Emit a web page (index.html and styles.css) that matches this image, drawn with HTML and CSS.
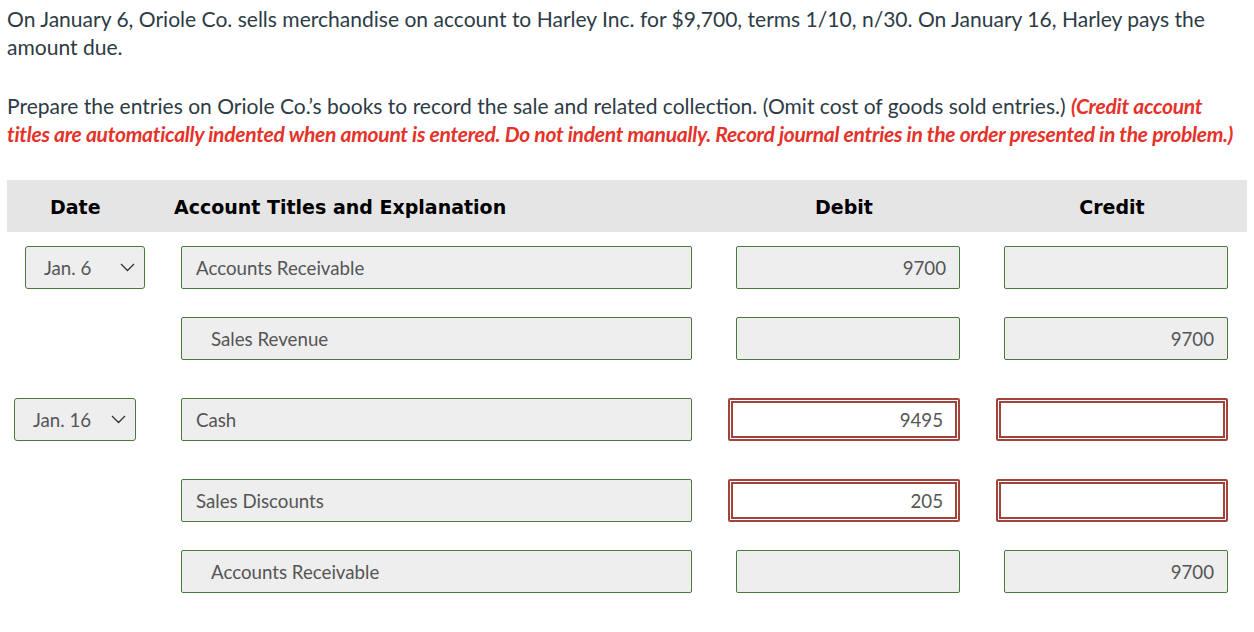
FILE: index.html
```html
<!DOCTYPE html>
<html lang="en">
<head>
<meta charset="utf-8">
<title>Journal entries</title>
<link rel="stylesheet" href="styles.css">
</head>
<body>
<div class="page">
  <p class="q">On January 6, Oriole Co. sells merchandise on account to Harley Inc. for $9,700, terms 1/10, n/30. On January 16, Harley pays the amount due.</p>
  <p class="q q2">Prepare the entries on Oriole Co.’s books to record the sale and related collection. (Omit cost of goods sold entries.) <em class="note">(Credit account titles are automatically indented when amount is entered. Do not indent manually. Record journal entries in the order presented in the problem.)</em></p>

  <div class="journal">
    <div class="jrow head">
      <div class="h-date">Date</div>
      <div class="h-acct">Account Titles and Explanation</div>
      <div class="h-debit">Debit</div>
      <div class="h-credit">Credit</div>
    </div>

    <div class="jrow first">
      <div class="sel"><span>Jan. 6</span><svg class="chev" width="15" height="9" viewBox="0 0 15 9"><path d="M1 1 L7.5 7.5 L14 1" fill="none" stroke="#333" stroke-width="1.3"/></svg></div>
      <div class="fld acct">Accounts Receivable</div>
      <div class="fld amt debit">9700</div>
      <div class="fld amt credit"></div>
    </div>

    <div class="jrow">
      <div></div>
      <div class="fld acct indent">Sales Revenue</div>
      <div class="fld amt debit"></div>
      <div class="fld amt credit">9700</div>
    </div>

    <div class="jrow err">
      <div class="sel sel-16"><span>Jan. 16</span><svg class="chev" width="15" height="9" viewBox="0 0 15 9"><path d="M1 1 L7.5 7.5 L14 1" fill="none" stroke="#333" stroke-width="1.3"/></svg></div>
      <div class="fld acct">Cash</div>
      <div class="bad debit-bad"><div class="bad-in">9495</div></div>
      <div class="bad credit-bad"><div class="bad-in"></div></div>
    </div>

    <div class="jrow err">
      <div></div>
      <div class="fld acct">Sales Discounts</div>
      <div class="bad debit-bad"><div class="bad-in">205</div></div>
      <div class="bad credit-bad"><div class="bad-in"></div></div>
    </div>

    <div class="jrow">
      <div></div>
      <div class="fld acct indent">Accounts Receivable</div>
      <div class="fld amt debit"></div>
      <div class="fld amt credit">9700</div>
    </div>
  </div>
</div>
</body>
</html>
```

FILE: styles.css
```css
* { box-sizing: border-box; }

body {
  margin: 0;
  background: #ffffff;
  font-family: Lato, "Open Sans", sans-serif;
}

.page {
  padding: 5px 7px 0 7px;
}

.q {
  margin: 0;
  font-size: 21.05px;
  line-height: 28px;
  color: #2d3b45;
}

.q2 {
  margin-top: 31px;
}

.note {
  font-weight: 700;
  font-style: italic;
  color: #e5322a;
  letter-spacing: -0.28px;
}

.journal {
  margin-top: 32px;
  width: 1240px;
}

.jrow {
  display: grid;
  grid-template-columns: 160px 545px 268px 267px;
  align-items: center;
  margin-top: 28px;
}

.jrow.first { margin-top: 14px; }
.jrow.err { margin-top: 38px; }

.head {
  margin-top: 0;
  height: 52px;
  background: #e5e5e5;
  font-family: "DejaVu Sans", Verdana, sans-serif;
  font-weight: 700;
  font-size: 19px;
  color: #000;
}

.h-date { padding-left: 43px; padding-top: 2px; }
.h-acct { padding-left: 7px; padding-top: 2px; }
.h-debit { padding: 2px 24px 0 20px; text-align: center; }
.h-credit { padding: 2px 23px 0 20px; text-align: center; }

.sel {
  width: 120px;
  height: 43px;
  margin-left: 18px;
  padding: 0 9px 0 18px;
  display: flex;
  align-items: center;
  justify-content: space-between;
  background: #eeeeee;
  border: 1px solid #4a7a3b;
  border-radius: 3px;
  font-size: 18.7px;
  color: #555;
}

.sel-16 {
  width: 122px;
  margin-left: 7px;
  padding-right: 9px;
}

.chev { display: block; }

.fld {
  height: 43px;
  display: flex;
  align-items: center;
  background: #eeeeee;
  border: 1px solid #4a7a3b;
  border-radius: 2px;
  font-size: 18.7px;
  color: #555;
}

.acct {
  width: 511px;
  margin-left: 14px;
  padding-left: 14px;
}

.acct.indent { padding-left: 29px; }

.amt {
  width: 224px;
  margin-left: 24px;
  justify-content: flex-end;
  padding-right: 13px;
}

.bad {
  width: 232px;
  height: 43px;
  margin-left: 16px;
  padding: 1px;
  border: 2px solid #a2443e;
  border-radius: 2px;
  background: #ffffff;
}

.bad-in {
  height: 100%;
  display: flex;
  align-items: center;
  justify-content: flex-end;
  padding-right: 12px;
  border: 2px solid #a2443e;
  background: #ffffff;
  font-size: 18.7px;
  color: #555;
}
```
